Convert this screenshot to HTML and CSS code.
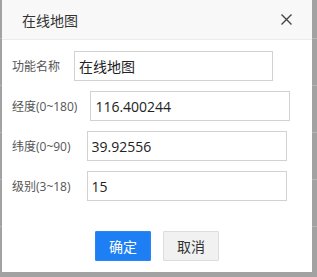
FILE: index.html
```html
<!DOCTYPE html>
<html lang="zh">
<head>
<meta charset="utf-8">
<link rel="stylesheet" href="styles.css">
</head>
<body>
<div class="dialog">
  <div class="header">
    <span class="title">在线地图</span>
    <svg class="close" width="11" height="11" viewBox="0 0 11 11"><path d="M0.5 0.5L10.5 10.5M10.5 0.5L0.5 10.5" stroke="#444" stroke-width="1.4" fill="none"/></svg>
  </div>
  <div class="form">
    <div class="row"><span class="label">功能名称</span><input class="field f1" value="在线地图"></div>
    <div class="row"><span class="label">经度(0~180)</span><input class="field f2" value="116.400244"></div>
    <div class="row"><span class="label">纬度(0~90)</span><input class="field f3" value="39.92556"></div>
    <div class="row"><span class="label">级别(3~18)</span><input class="field f3" value="15"></div>
  </div>
  <div class="actions">
    <button class="btn primary">确定</button>
    <button class="btn">取消</button>
  </div>
</div>
</body>
</html>
```
FILE: styles.css
```css
html, body {
  margin: 0;
  padding: 0;
}
body {
  width: 317px;
  height: 277px;
  overflow: hidden;
  background-color: #a2a2a2;
  background-image: repeating-linear-gradient(to bottom, transparent 0, transparent 46px, #b6b6b6 46px, #b6b6b6 47px);
  background-position: 0 -8px;
  font-family: "Noto Sans CJK SC", "Liberation Sans", sans-serif;
}
.dialog {
  margin-left: 2px;
  width: 310px;
  height: 272px;
  background: #fff;
  box-sizing: border-box;
}
.header {
  height: 40px;
  box-sizing: border-box;
  background: #f8f8f8;
  border-bottom: 1px solid #ececec;
  display: flex;
  align-items: center;
  justify-content: space-between;
  padding: 0 20px 0 20px;
}
.title {
  font-size: 14px;
  color: #333;
}
.close {
  display: block;
}
.form {
  padding: 11px 0 0 10px;
  display: flex;
  flex-direction: column;
  gap: 10px;
}
.row {
  display: flex;
  align-items: center;
  height: 30px;
}
.label {
  font-size: 12px;
  color: #555;
  font-family: "Open Sans", "Noto Sans CJK SC", sans-serif;
  letter-spacing: 0;
}
.field {
  box-sizing: border-box;
  width: 200px;
  height: 30px;
  border: 1px solid #d2d2d2;
  padding: 0 4px;
  font-size: 14px;
  color: #222;
  font-family: "Open Sans", "Noto Sans CJK SC", sans-serif;
  outline: none;
  background: #fff;
}
.f1 { margin-left: 14px; width: 199px; }
.f2 { margin-left: 13px; }
.f3 { margin-left: 16px; }
.actions {
  display: flex;
  justify-content: center;
  gap: 12px;
  padding-top: 30px;
}
.btn {
  width: 56px;
  height: 30px;
  box-sizing: border-box;
  border: 1px solid #dcdcdc;
  background: #f1f1f1;
  color: #333;
  font-size: 14px;
  font-family: "Noto Sans CJK SC", sans-serif;
  padding: 0;
  border-radius: 1px;
}
.btn.primary {
  background: #1e7ff5;
  border-color: #2a86f0;
  color: #fff;
}
```
